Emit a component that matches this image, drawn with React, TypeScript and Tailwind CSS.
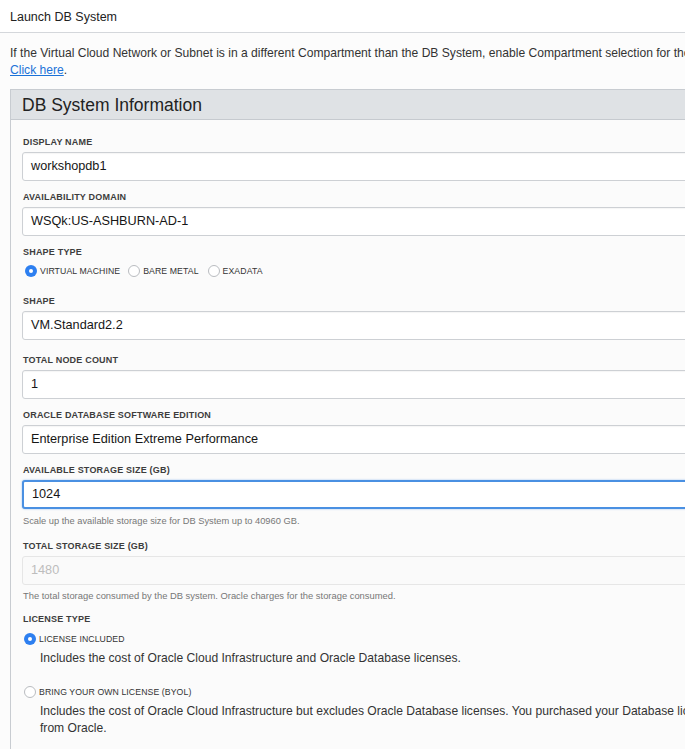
import React from "react";

const font = { fontFamily: '"Liberation Sans", Arial, sans-serif' };

function Label({ text, className = "" }: { text: string; className?: string }) {
  return (
    <div className={"h-[12px] leading-[12px] text-[9px] font-bold tracking-[0.2px] text-[#3d3d3d] uppercase " + className}>
      {text}
    </div>
  );
}

function Field({ value, className = "", focused = false, disabled = false }: { value: string; className?: string; focused?: boolean; disabled?: boolean }) {
  let box = "border border-[#cdd0d4] bg-white text-[#161616] shadow-[inset_0_1px_1px_rgba(0,0,0,0.04)]";
  if (focused) box = "border-2 border-[#4a90e2] bg-white text-[#161616] shadow-[0_0_2px_rgba(74,144,226,0.6)] pl-[7px]";
  if (disabled) box = "border border-[#e6e6e6] bg-[#fafafa] text-[#bdbdbd]";
  return (
    <div className={"h-[29px] rounded-[3px] flex items-center pl-[8px] text-[12.7px] " + box + " " + className}>
      {value}
    </div>
  );
}

function Radio({ checked, label, className = "" }: { checked: boolean; label: string; className?: string }) {
  return (
    <div className={"flex items-center h-[14px] " + className}>
      {checked ? (
        <span className="w-[12px] h-[12px] rounded-full bg-[#2d7ff0] flex items-center justify-center">
          <span className="w-[4px] h-[4px] rounded-full bg-white" />
        </span>
      ) : (
        <span className="w-[12px] h-[12px] rounded-full border border-[#b9bcc0] bg-white" />
      )}
      <span className="ml-[3px] text-[8.7px] leading-[12px] text-[#333] tracking-[0.1px] whitespace-nowrap">{label}</span>
    </div>
  );
}

export default function App() {
  return (
    <div className="w-full min-h-screen overflow-hidden bg-[#fcfcfc]" style={font}>
      <div className="w-[780px]">
        <div className="h-[33px] bg-white border-b border-[#d4d7db] flex items-center pl-[10px] pt-[3px] text-[12.5px] text-[#222]">
          Launch DB System
        </div>
        <div className="pl-[10px] pt-[12px] text-[12.1px] leading-[17px] text-[#333]">
          <div className="whitespace-nowrap">
            If the Virtual Cloud Network or Subnet is in a different Compartment than the DB System, enable Compartment selection for those resources.
          </div>
          <div>
            <a className="text-[#1b72d8] underline">Click here</a>.
          </div>
        </div>

        <div className="ml-[10px] mt-[10px] border border-[#c8ccd1] bg-[#fbfbfb]">
          <div className="h-[30px] bg-[#dfe2e5] border-b border-[#c6cacf] flex items-center pl-[11px] pt-[2px] text-[17.5px] text-[#222]">
            DB System Information
          </div>
          <div className="px-[11px] pt-[16px] pb-[40px]">
            <Label text="Display Name" className="pl-[1px]" />
            <Field value="workshopdb1" className="mt-[4px]" />

            <Label text="Availability Domain" className="mt-[10px] pl-[1px]" />
            <Field value="WSQk:US-ASHBURN-AD-1" className="mt-[4px]" />

            <Label text="Shape Type" className="mt-[10px] pl-[1px]" />
            <div className="mt-[6px] flex items-center pl-[3px]">
              <Radio checked label="VIRTUAL MACHINE" />
              <Radio checked={false} label="BARE METAL" className="ml-[8px]" />
              <Radio checked={false} label="EXADATA" className="ml-[9px]" />
            </div>

            <Label text="Shape" className="mt-[17px] pl-[1px]" />
            <Field value="VM.Standard2.2" className="mt-[4px]" />

            <Label text="Total Node Count" className="mt-[14px] pl-[1px]" />
            <Field value="1" className="mt-[4px]" />

            <Label text="Oracle Database Software Edition" className="mt-[10px] pl-[1px]" />
            <Field value="Enterprise Edition Extreme Performance" className="mt-[4px]" />

            <Label text="Available Storage Size (GB)" className="mt-[10px] pl-[1px]" />
            <Field value="1024" focused className="mt-[4px]" />
            <div className="mt-[6px] pl-[1px] h-[12px] leading-[12px] text-[9.3px] text-[#777]">
              Scale up the available storage size for DB System up to 40960 GB.
            </div>

            <Label text="Total Storage Size (GB)" className="mt-[13px] pl-[1px]" />
            <Field value="1480" disabled className="mt-[4px]" />
            <div className="mt-[5px] pl-[1px] h-[12px] leading-[12px] text-[9.4px] text-[#777]">
              The total storage consumed by the DB system. Oracle charges for the storage consumed.
            </div>

            <Label text="License Type" className="mt-[11px] pl-[1px]" />
            <Radio checked label="LICENSE INCLUDED" className="mt-[7px] pl-[2px]" />
            <div className="mt-[4px] pl-[18px] text-[12.1px] leading-[17px] text-[#333]">
              Includes the cost of Oracle Cloud Infrastructure and Oracle Database licenses.
            </div>
            <Radio checked={false} label="BRING YOUR OWN LICENSE (BYOL)" className="mt-[18px] pl-[2px]" />
            <div className="mt-[4px] pl-[18px] text-[12.1px] leading-[17px] text-[#333]">
              <div className="whitespace-nowrap">
                Includes the cost of Oracle Cloud Infrastructure but excludes Oracle Database licenses. You purchased your Database licenses
              </div>
              <div>from Oracle.</div>
            </div>
          </div>
        </div>
      </div>
    </div>
  );
}
